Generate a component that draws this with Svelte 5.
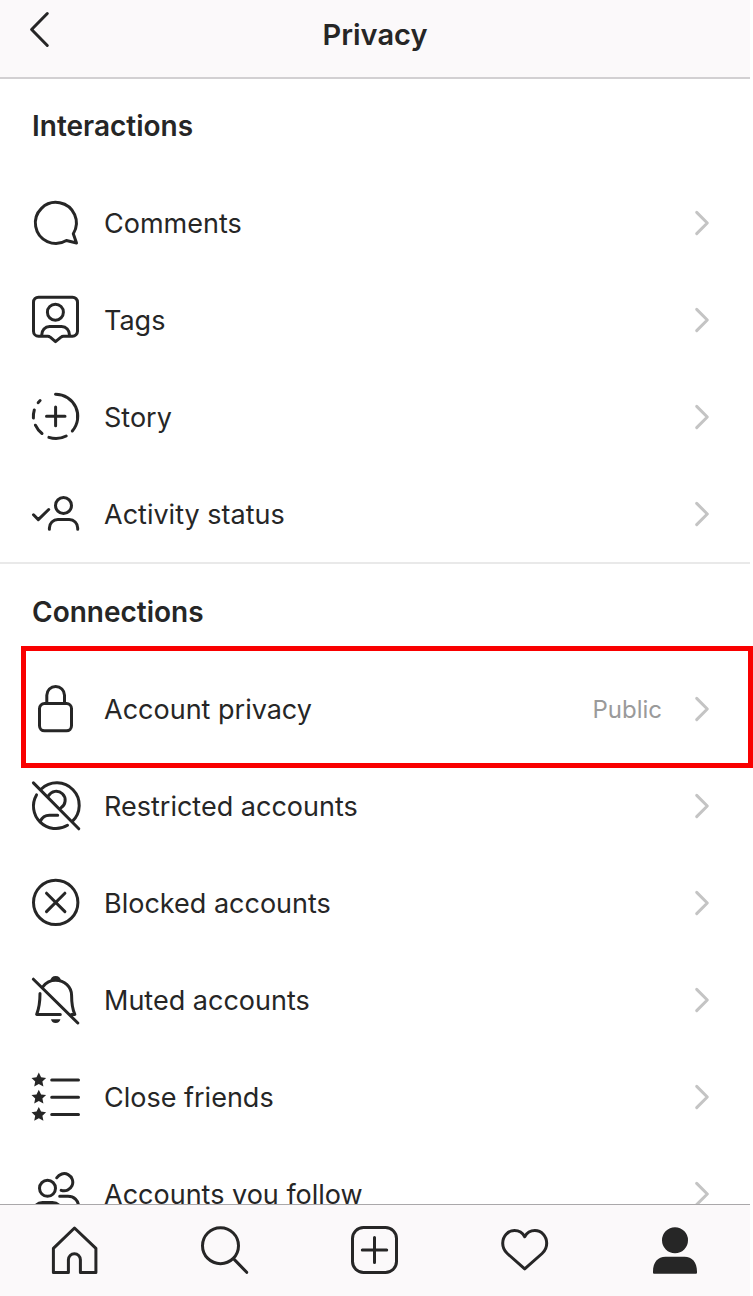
<script>
  const sections = [
    {
      title: 'Interactions',
      rows: [
        { icon: 'comment', label: 'Comments' },
        { icon: 'tag', label: 'Tags' },
        { icon: 'story', label: 'Story' },
        { icon: 'activity', label: 'Activity status' },
      ],
    },
    {
      title: 'Connections',
      rows: [
        { icon: 'lock', label: 'Account privacy', value: 'Public', highlighted: true },
        { icon: 'restricted', label: 'Restricted accounts' },
        { icon: 'blocked', label: 'Blocked accounts' },
        { icon: 'muted', label: 'Muted accounts' },
        { icon: 'friends', label: 'Close friends' },
        { icon: 'follow', label: 'Accounts you follow' },
      ],
    },
  ];

  const tabs = [
    { icon: 'home', label: 'Home' },
    { icon: 'search', label: 'Search' },
    { icon: 'add', label: 'New post' },
    { icon: 'heart', label: 'Activity' },
    { icon: 'profile', label: 'Profile' },
  ];

  const star = 'l2.3 4.7 5 .6-3.7 3.5 1 5-4.6-2.5-4.6 2.5 1-5-3.7-3.5 5-.6z';

  // Stroked outlines and solid shapes, on a 56 by 56 grid.
  const icons = {
    comment: { line: 'M45.3 38.7L48.5 48L38.4 45.5A20.5 20.5 0 1 1 45.3 38.7Z' },
    tag: {
      line: 'M10.5 5.2H44.5a5 5 0 0 1 5 5V39.2a5 5 0 0 1-5 5H35.5q-1.5 0-2.5 1L27.5 49.6L22.2 45.2q-1-1-2.5-1H10.5a5 5 0 0 1-5-5V10.2a5 5 0 0 1 5-5ZM19.4 20.2a8 8 0 1 0 16 0a8 8 0 1 0-16 0M13.6 43.5C13.6 38 17.1 34.6 21.6 34.6H33.6C38.1 34.6 41.6 38 41.6 43.5',
    },
    story: {
      line: 'M27.5 5.2A22.2 22.2 0 0 1 44.3 42M38.2 47A22.2 22.2 0 0 1 20.9 48.4M14 44.5A22.2 22.2 0 0 1 7.4 36.2M5.4 29A22.2 22.2 0 0 1 6.3 21M10.2 13.7A22.2 22.2 0 0 1 12.1 11.5M18.5 27.3H37M27.6 18V36.7',
    },
    activity: {
      line: 'M27.5 19.5a8 8 0 1 0 16 0a8 8 0 1 0-16 0M21.4 43.3V42a8.5 8.5 0 0 1 8.5-8.5H41.2a8.5 8.5 0 0 1 8.5 8.5V43.3M5.5 28.8L10.3 33.6L20.7 23.5',
    },
    lock: {
      line: 'M16.5 22.5H38.5a5 5 0 0 1 5 5V44.8a5 5 0 0 1-5 5H16.5a5 5 0 0 1-5-5V27.5a5 5 0 0 1 5-5ZM18.8 22.5V14.3a8.8 8.8 0 0 1 17.7 0V22.5',
    },
    restricted: {
      line: 'M5.4 4.9L50.8 50.8M13.3 11A22.4 22.4 0 0 1 44.3 43.4M39.5 47.3A22.4 22.4 0 0 1 8.5 16.9M20.5 17.8A8.9 8.9 0 1 1 33 29.7M29.7 37.3H21.5C17 37.3 14 39.5 12.3 43.5',
    },
    blocked: {
      line: 'M5.5 27.4a22.2 22.2 0 1 0 44.4 0a22.2 22.2 0 1 0-44.4 0M18.5 18.2L36.9 36.6M36.9 18.2L18.5 36.6',
    },
    muted: {
      line: 'M5.4 7.2L49.8 51M12 21.5C12 29 11.5 35 8.7 42.4H32.3M15 14.7C18 10.5 22.5 8.2 27.6 8.2C36.5 8.2 43.6 15 43.6 23.5C43.6 31 44.2 36.5 46.8 42.4H43.5',
      fill: 'M22.3 8.7A5.4 5.4 0 0 1 33 8.7ZM23 47.2H32.4C32 49.5 30.3 51 27.7 51C25 51 23.4 49.5 23 47.2Z',
    },
    friends: {
      line: 'M23.7 11H50.5M23.7 28.3H50.5M23.7 45.5H50.5',
      fill: `M10.8 3.6${star}M10.8 20.8${star}M10.8 37.9${star}`,
    },
    follow: {
      line: 'M11.5 22.3a8 8 0 1 0 16 0a8 8 0 1 0-16 0M28.8 11.8A8.6 8.6 0 1 1 33.2 24.3M5 46A9.5 9.5 0 0 1 14.5 36.6H24.5A9.5 9.5 0 0 1 34 46M31.7 30.3H40C46 30.3 50.5 34.5 50.5 40.5',
    },
    home: { line: 'M27.5 6L6.4 26.3V50.6H21.4V37.7a6 6 0 0 1 12 0V50.6H48.9V26.3Z' },
    search: { line: 'M5.5 23.7a18 18 0 1 0 36 0a18 18 0 1 0-36 0M36.7 36.9L49.7 50.3' },
    add: {
      line: 'M16.5 5.5H38.5a11 11 0 0 1 11 11V39.5a11 11 0 0 1-11 11H16.5a11 11 0 0 1-11-11V16.5a11 11 0 0 1 11-11ZM15.3 28H39.7M27.5 15.5V40.5',
    },
    heart: {
      line: 'M27.7 46.9L10.3 31.5C7.5 29 5.7 25.6 5.7 21.3C5.7 14 11 8.6 17.5 8.6C22 8.6 25.6 10.9 27.7 14.8C29.8 10.9 33.4 8.6 37.9 8.6C44.4 8.6 49.7 14 49.7 21.3C49.7 25.6 47.9 29 45.1 31.5Z',
    },
    profile: {
      fill: 'M15 18.3a13 13 0 1 0 26 0a13 13 0 1 0-26 0M6 49.5C6 40 11 34.7 18.5 34.7H37.5C45 34.7 50 40 50 49.5V50.7a1 1 0 0 1-1 1H7a1 1 0 0 1-1-1Z',
    },
  };
</script>

{#snippet glyph(name)}
  <svg class="icon" viewBox="0 0 56 56" aria-hidden="true">
    {#if icons[name].line}<path class="line" d={icons[name].line} />{/if}
    {#if icons[name].fill}<path class="solid" d={icons[name].fill} />{/if}
  </svg>
{/snippet}

<div class="app">
  <header>
    <button class="back" aria-label="Back">
      <svg viewBox="0 0 24 40" aria-hidden="true"><path class="line" d="M19.3 4.5L3.6 20.5L19.3 36.5" /></svg>
    </button>
    <h1>Privacy</h1>
  </header>

  <main>
    {#each sections as section}
      <section>
        <h2>{section.title}</h2>
        <ul>
          {#each section.rows as row}
            <li class:highlighted={row.highlighted}>
              <button class="row">
                {@render glyph(row.icon)}
                <span class="label">{row.label}</span>
                {#if row.value}<span class="value">{row.value}</span>{/if}
                <svg class="chevron" viewBox="0 0 16 26" aria-hidden="true"><path d="M2.7 2.4L13.3 13L2.7 23.6" /></svg>
              </button>
            </li>
          {/each}
        </ul>
      </section>
    {/each}
  </main>

  <nav>
    {#each tabs as tab}
      <button aria-label={tab.label}>{@render glyph(tab.icon)}</button>
    {/each}
  </nav>
</div>

<style>
  :global(body) {
    background: #fff;
  }

  .app {
    box-sizing: border-box;
    display: flex;
    flex-direction: column;
    height: 100vh;
    padding-right: 3px;
    color: #262626;
    font-family: Inter, 'Liberation Sans', sans-serif;
    font-size: 27px;
    line-height: 36px;
  }

  button {
    margin: 0;
    padding: 0;
    border: 0;
    background: none;
    color: inherit;
    font: inherit;
    text-align: left;
    cursor: pointer;
  }

  svg {
    display: block;
    flex: none;
  }

  .line {
    fill: none;
    stroke: #262626;
    stroke-width: 3;
    stroke-linecap: round;
    stroke-linejoin: round;
  }

  .solid {
    fill: #262626;
  }

  .icon {
    width: 56px;
    height: 56px;
  }

  header {
    display: grid;
    grid-template-columns: 1fr auto 1fr;
    align-items: start;
    flex: none;
    padding: 9px 28px 18px;
    border-bottom: 2px solid #d2d0d2;
    background: #fbf9fa;
  }

  .back {
    justify-self: start;
    height: 50px;
  }

  .back svg {
    width: 24px;
    height: 40px;
    margin-bottom: 10px;
  }

  h1,
  h2 {
    margin: 0;
    font-weight: 600;
  }

  h1 {
    padding-top: 8px;
    font-size: 29px;
  }

  h2 {
    padding: 29px 32px 31px;
    font-size: 28px;
  }

  main {
    flex: 1;
    min-height: 0;
    overflow-x: clip;
    overflow-y: auto;
    margin-right: -3px;
    padding-right: 3px;
    scrollbar-width: none;
  }

  section + section {
    margin-top: -1px;
    padding-top: 1px;
    border-top: 2px solid #e9e9e9;
  }

  ul {
    margin: 0;
    padding: 0;
    list-style: none;
  }

  li {
    position: relative;
  }

  .row {
    display: flex;
    align-items: center;
    box-sizing: border-box;
    width: 100%;
    padding: 20px 40px 21px 28px;
  }

  .label,
  .value {
    padding-top: 2px;
  }

  .label {
    flex: 1;
    margin-left: 20px;
  }

  .value {
    margin-right: 32px;
    color: #9a9a9a;
    font-size: 24px;
  }

  .chevron {
    width: 16px;
    height: 26px;
  }

  .chevron path {
    fill: none;
    stroke: #c4c4c4;
    stroke-width: 3;
    stroke-linecap: round;
    stroke-linejoin: round;
  }

  .highlighted::after {
    content: '';
    position: absolute;
    inset: -15px -3px -10px 21px;
    border: 5px solid #f90000;
    pointer-events: none;
  }

  nav {
    display: grid;
    grid-template-columns: repeat(5, 1fr);
    flex: none;
    padding: 17px 0 18px;
    border-top: 1px solid #aaa8aa;
    background: #fbf9fa;
  }

  nav button {
    justify-self: center;
  }
</style>
